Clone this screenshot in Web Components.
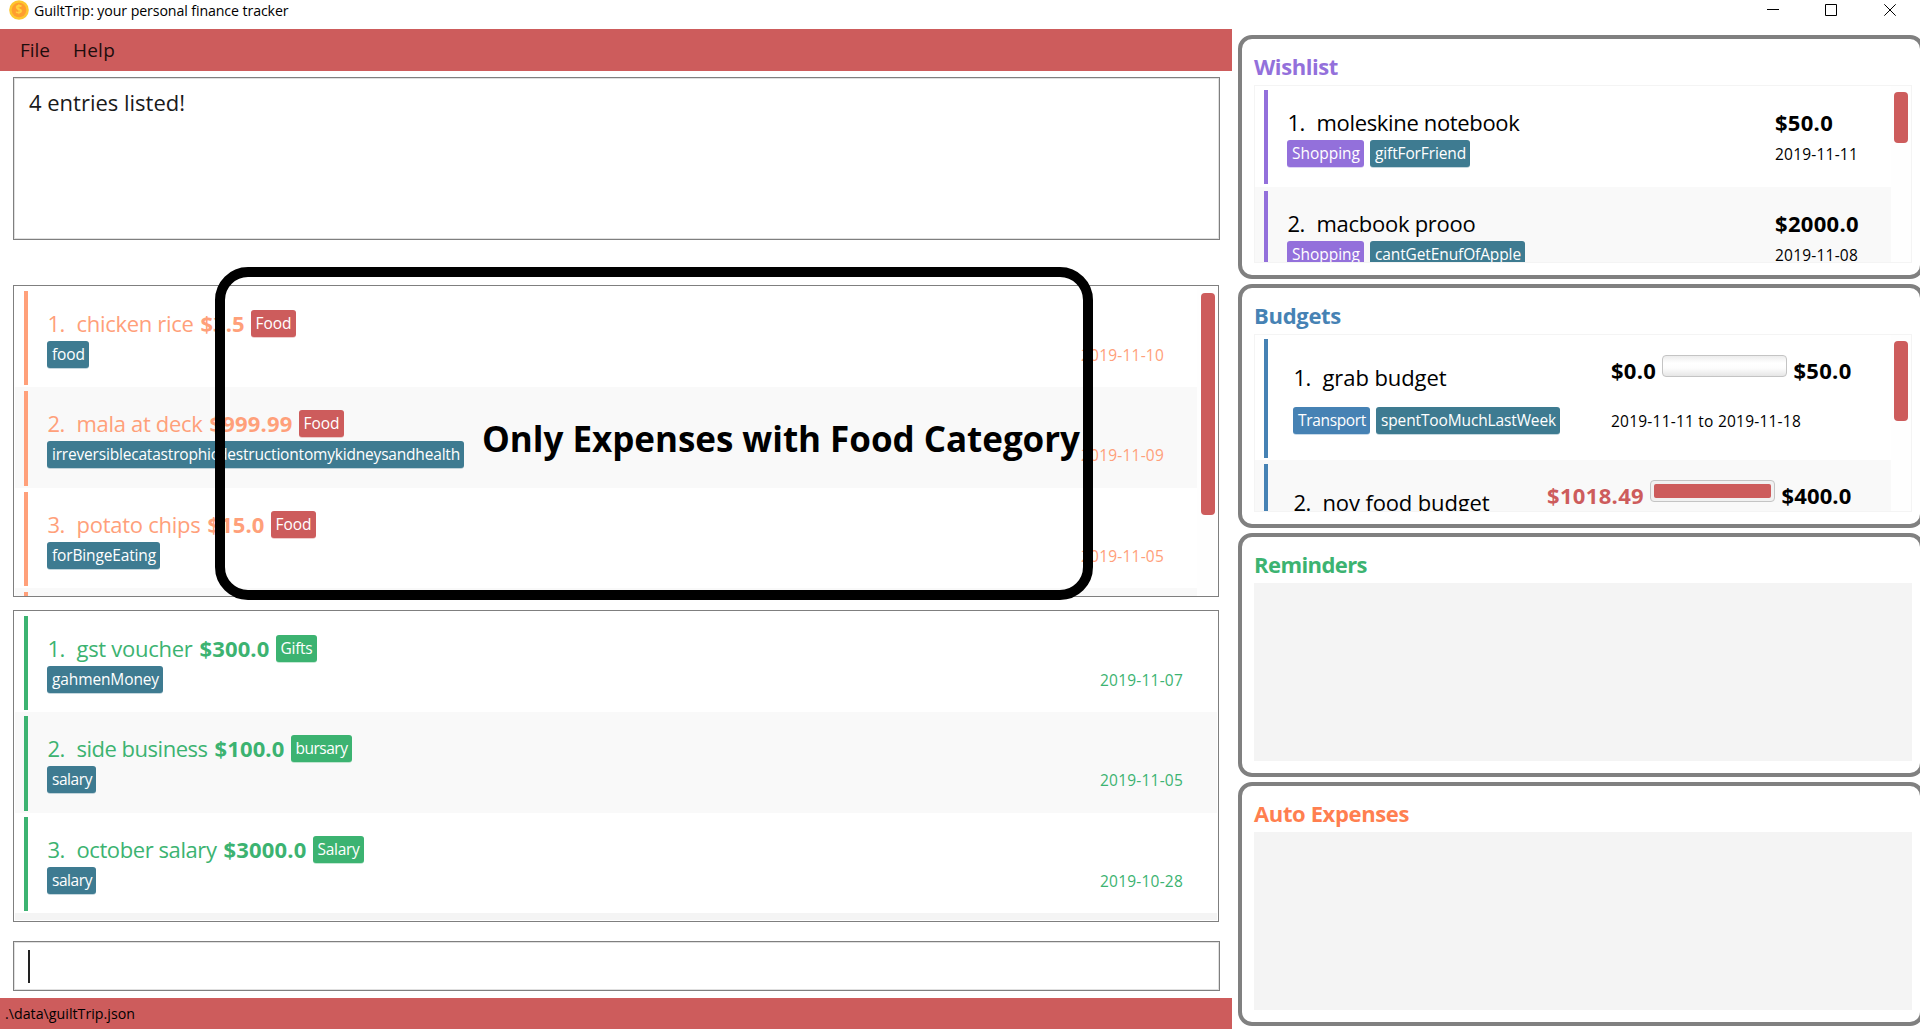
<!DOCTYPE html>
<html lang="en">
<head>
<meta charset="utf-8">
<title>GuiltTrip: your personal finance tracker</title>
<style>
html,body{margin:0;height:1029px;overflow:hidden;background:#fff;font-family:"Open Sans","Noto Sans",sans-serif;color:#000}
</style>
</head>
<body>
<guilt-app></guilt-app>
<script>
const define = (name, render, init) => customElements.define(name, class extends HTMLElement {
  connectedCallback() {
    if (this.shadowRoot) return;
    this.attachShadow({mode: 'open'}).innerHTML = render(this);
    if (init) init(this);
  }
});
const at = (el, name, fallback = '') => el.getAttribute(name) ?? fallback;

/* One line of text whose tracking is adjusted to span a given width. */
define('fit-text', el => `<style>
  :host{display:block;flex:none;white-space:pre;width:${at(el,'w')}px;line-height:${at(el,'lh',31)}px;font-size:${at(el,'size',22)}px;font-weight:${el.hasAttribute('bold') ? 700 : 400}}
  span{display:inline-block}
  </style><span><slot></slot></span>`, el => {
  const span = el.shadowRoot.querySelector('span');
  const gap = (Number(at(el,'w')) - span.getBoundingClientRect().width) / el.textContent.length;
  span.style.letterSpacing = gap.toFixed(3) + 'px';
});

define('entry-tag', el => `<style>
  :host{display:block;flex:none;box-sizing:border-box;height:27px;width:${at(el,'w')}px;padding-left:5px;border-radius:3px;background:${at(el,'bg','#3e7b91')};color:#fff;box-shadow:0 .7px 0 ${at(el,'bg','#3e7b91')}66}
  </style><fit-text size="15.5" lh="27" w="${at(el,'w') - 9}">${at(el,'label')}</fit-text>`);

/* A list row: coloured stripe and the row's content. */
define('list-row', el => `<style>
  :host{display:flex;flex:none;box-sizing:border-box;height:${at(el,'h','100.6')}px;padding:4px 0 2.3px 9px;background:${el.hasAttribute('odd') ? '#f9f9f9' : '#fff'}}
  .stripe{flex:none;width:4px;background:var(--accent)}
  .body{flex:1;display:flex;justify-content:space-between;min-width:0}
  </style><div class="stripe"></div><div class="body"><slot></slot></div>`);

define('entry-row', el => {
  const [name, nameW, price, priceW, cat, catW, tag, tagW, date] = at(el,'data').split('|');
  return `<style>
  :host{display:block;flex:none;color:var(--accent)}
  .main{padding:17px 0 0 19px}
  .line{display:flex;height:33px}
  .line entry-tag{margin-top:2px}
  .date{padding:54px 34px 0 0;padding-right:var(--date-right,34px)}
  .index{margin:0 12px 0 .5px}
  .name{margin-right:7px}
  .price{margin-right:6px}
  </style>
  <list-row h="100.49" ${el.hasAttribute('odd') ? 'odd' : ''}>
    <div class="main">
      <div class="line"><fit-text class="index" w="17">${at(el,'n')}.</fit-text><fit-text class="name" w="${nameW}">${name}</fit-text><fit-text class="price" bold w="${priceW}">${price}</fit-text><entry-tag w="${catW}" bg="${at(el,'cat')}" label="${cat}"></entry-tag></div>
      <entry-tag w="${tagW}" label="${tag}"></entry-tag>
    </div>
    <div class="date"><fit-text size="15.5" lh="20" w="83">${date}</fit-text></div>
  </list-row>`;
});

define('wish-row', el => {
  const [name, nameW, price, priceW, tag, tagW, date] = at(el,'data').split('|');
  return `<style>
  :host{display:block;flex:none}
  .main{padding:17px 0 0 19px}
  .line{display:flex;height:33px}
  .index{margin:0 12px 0 .5px}
  .tags{display:flex;gap:6px}
  .side{width:116px;padding-top:17px}
  .side .d{margin-top:6px}
  </style>
  <list-row ${el.hasAttribute('odd') ? 'odd' : ''}>
    <div class="main">
      <div class="line"><fit-text class="index" w="17">${at(el,'n')}.</fit-text><fit-text w="${nameW}">${name}</fit-text></div>
      <div class="tags"><entry-tag w="77" bg="#9370db" label="Shopping"></entry-tag><entry-tag w="${tagW}" label="${tag}"></entry-tag></div>
    </div>
    <div class="side"><fit-text bold w="${priceW}">${price}</fit-text><fit-text class="d" size="15.5" lh="20" w="83">${date}</fit-text></div>
  </list-row>`;
});

define('budget-meter', el => `<style>
  :host{display:block;flex:none;box-sizing:border-box;width:125px;height:22px;border:1px solid #c4c4c4;border-radius:4px;padding:3px;background:linear-gradient(#ececec,#fff 35%,#fdfdfd 60%,#e6e6e6)}
  :host([full]){background:#f1f1f1}
  div{height:14px;border-radius:2px;background:#cd5c5c}
  </style>${el.hasAttribute('full') ? '<div></div>' : ''}`);

define('budget-row', el => {
  const [name, nameW, spent, spentW, limit, limitW] = at(el,'data').split('|');
  const over = el.hasAttribute('over');
  return `<style>
  :host{display:block;flex:none}
  .main{padding:23px 0 0 25px}
  .line{display:flex;height:45px}
  .index{margin:0 12px 0 .5px}
  .tags{display:flex;gap:6px}
  .side{padding:16px 39.5px 0 0}
  .amounts{display:flex}
  .spent{color:${over ? '#cd5c5c' : '#000'};margin-right:6px}
  .amounts .limit{margin-left:6.5px}
  .d{margin-top:25px}
  </style>
  <list-row h="125" ${el.hasAttribute('odd') ? 'odd' : ''}>
    <div class="main">
      <div class="line"><fit-text class="index" w="17">${at(el,'n')}.</fit-text><fit-text w="${nameW}">${name}</fit-text></div>
      ${over ? '' : '<div class="tags"><entry-tag w="77" bg="#4682b4" label="Transport"></entry-tag><entry-tag w="184" label="spentTooMuchLastWeek"></entry-tag></div>'}
    </div>
    <div class="side">
      <div class="amounts"><fit-text class="spent" bold w="${spentW}">${spent}</fit-text><budget-meter ${over ? 'full' : ''}></budget-meter><fit-text class="limit" bold w="${limitW}">${limit}</fit-text></div>
      ${over ? '' : '<fit-text class="d" size="15.5" lh="20" w="190">2019-11-11 to 2019-11-18</fit-text>'}
    </div>
  </list-row>`;
});

/* Scrollable list: rows on the left, a rounded thumb on the right. */
define('scroll-list', el => `<style>
  :host{display:flex;box-sizing:border-box;overflow:hidden}
  .rows{flex:1;display:flex;flex-direction:column;min-width:0}
  .bar{flex:none;width:${at(el,'barw',20)}px;display:flex;justify-content:center;padding:6px 0 0 ${at(el,'shift',0)}px;box-sizing:border-box;background:#fefefe}
  .thumb{width:13.5px;height:${at(el,'thumb',0)}px;border-radius:4px;background:#cd5c5c}
  </style><div class="rows"><slot></slot></div>${el.hasAttribute('thumb') ? '<div class="bar"><div class="thumb"></div></div>' : ''}`);

define('side-panel', el => `<style>
  :host{display:flex;flex-direction:column;flex:none;box-sizing:border-box;width:686px;height:244px;border:4px solid #808080;border-radius:14px;padding:12px 8px 12px 12px;background:#fff}
  .title{color:${at(el,'color')};height:34px}
  .content{width:657.5px;height:178px}
  .empty{background:#f4f4f4}
  ::slotted(scroll-list){height:178px;border:1px solid #f4f4f4}
  </style><div class="title"><fit-text bold w="${at(el,'tw')}">${at(el,'label')}</fit-text></div>
  <div class="content ${el.children.length ? '' : 'empty'}"><slot></slot></div>`);

define('coin-icon', () => `<style>:host{display:block;width:20px;height:20px}svg{display:block}
  text{font:700 12px "Open Sans",sans-serif;fill:#ffd23f}</style>
  <svg width="20" height="20" viewBox="0 0 20 20"><circle cx="10" cy="10" r="9.8" fill="#fdc62f"/><circle cx="10" cy="10" r="7.3" fill="#ff9d2e"/><text x="10" y="14.2" text-anchor="middle">$</text></svg>`);

define('title-bar', () => `<style>
  :host{display:flex;height:29px;background:#fff;justify-content:space-between}
  .left{display:flex;padding-left:9px}
  fit-text{margin-left:5px}
  svg{display:block}
  </style><div class="left"><coin-icon></coin-icon><fit-text size="14.2" lh="21" w="254.5">GuiltTrip: your personal finance tracker</fit-text></div>
  <svg width="160" height="29" viewBox="0 0 160 29" fill="none" stroke="#000" stroke-width="1"><path d="M7 9.5h12M65.5 4.500h11v11h-11zM124.300 4.300l11.400 11.400M135.700 4.300l-11.400 11.400"/></svg>`);

define('menu-bar', () => `<style>
  :host{display:flex;height:42px;background:#cd5c5c;padding-left:20px;gap:23px;color:#1e0d0d}
  </style><fit-text size="19" lh="42" w="30">File</fit-text><fit-text size="19" lh="42" w="42">Help</fit-text>`);

define('note-overlay', () => `<style>
  :host{position:absolute;left:215px;top:267px;width:878px;height:333px;box-sizing:border-box;border:10px solid #000;border-radius:33px;display:flex;justify-content:flex-end;align-items:flex-start;padding:135px 3px 0 0}
  </style><fit-text bold size="35" lh="53" w="598">Only Expenses with Food Category</fit-text>`);

define('guilt-app', () => `<style>
  :host{display:flex;flex-direction:column;width:1920px;height:1029px;overflow:hidden;position:relative}
  .cols{display:flex;height:1000px}
  .left{width:1232px;flex:none;display:flex;flex-direction:column}
  .box{box-sizing:border-box;border:1px solid #7f7f7f;box-shadow:inset 0 0 0 1px #e0e0e0;width:1207px;margin-left:13px;flex:none}
  .result{height:163px;margin-top:6px;padding:11px 0 0 15px;color:#1a1a1a}
  .list{width:1206px;height:312px;margin-left:13px;border:1px solid #7f7f7f;padding:1px;flex:none}
  .exp{--accent:#ffa07a;--date-right:33px;margin-top:45px}
  .inc{--accent:#3cb371;margin-top:13px}
  .command{height:50px;margin-top:19px;padding:8px 0 0 14px}
  .caret{width:2px;height:33px;background:#222}
  .filler{flex:1;background:#f4f4f4}
  .status{height:31px;margin-top:7px;background:#cd5c5c;padding-left:5px;box-sizing:border-box}
  .right{margin-left:6px;padding-top:6px;display:flex;flex-direction:column;gap:5px}
  </style>
  <title-bar></title-bar>
  <div class="cols">
    <div class="left">
      <menu-bar></menu-bar>
      <div class="box result"><fit-text lh="27" size="22" w="156">4 entries listed!</fit-text></div>
      <scroll-list class="list exp" thumb="222" barw="20" shift="2">
        <entry-row n="1" cat="#cd5c5c" data="chicken rice|117|$3.5|44|Food|45|food|42|2019-11-10"></entry-row>
        <entry-row odd n="2" cat="#cd5c5c" data="mala at deck|126|$999.99|83|Food|45|irreversiblecatastrophicdestructiontomykidneysandhealth|417|2019-11-09"></entry-row>
        <entry-row n="3" cat="#cd5c5c" data="potato chips|124|$15.0|57|Food|45|forBingeEating|113|2019-11-05"></entry-row>
        <list-row odd></list-row>
      </scroll-list>
      <scroll-list class="list inc">
        <entry-row n="1" cat="#3cb371" data="gst voucher|116|$300.0|70|Gifts|41|gahmenMoney|116|2019-11-07"></entry-row>
        <entry-row odd n="2" cat="#3cb371" data="side business|131|$100.0|70|bursary|61|salary|49|2019-11-05"></entry-row>
        <entry-row n="3" cat="#3cb371" data="october salary|140|$3000.0|83|Salary|51|salary|49|2019-10-28"></entry-row>
        <div class="filler"></div>
      </scroll-list>
      <div class="box command"><div class="caret"></div></div>
      <div class="status"><fit-text size="14.200" lh="31" w="130">.\\data\\guiltTrip.json</fit-text></div>
    </div>
    <div class="right">
      <side-panel label="Wishlist" tw="84" color="#9370db"><scroll-list thumb="51" barw="19.500" style="--accent:#9370db">
        <wish-row n="1" data="moleskine notebook|203|$50.0|58|giftForFriend|100|2019-11-11"></wish-row>
        <wish-row odd n="2" data="macbook prooo|159|$2000.0|84|cantGetEnufOfApple|155|2019-11-08"></wish-row>
      </scroll-list></side-panel>
      <side-panel label="Budgets" tw="87" color="#4682b4"><scroll-list thumb="80" barw="19.500" style="--accent:#4682b4">
        <budget-row n="1" data="grab budget|124|$0.0|45|$50.0|58"></budget-row>
        <budget-row odd over n="2" data="nov food budget|167|$1018.49|97|$400.0|70"></budget-row>
      </scroll-list></side-panel>
      <side-panel label="Reminders" tw="113" color="#3cb371"></side-panel>
      <side-panel label="Auto Expenses" tw="155" color="#ff7f50"></side-panel>
    </div>
  </div>
  <note-overlay></note-overlay>`);
</script>
</body>
</html>
